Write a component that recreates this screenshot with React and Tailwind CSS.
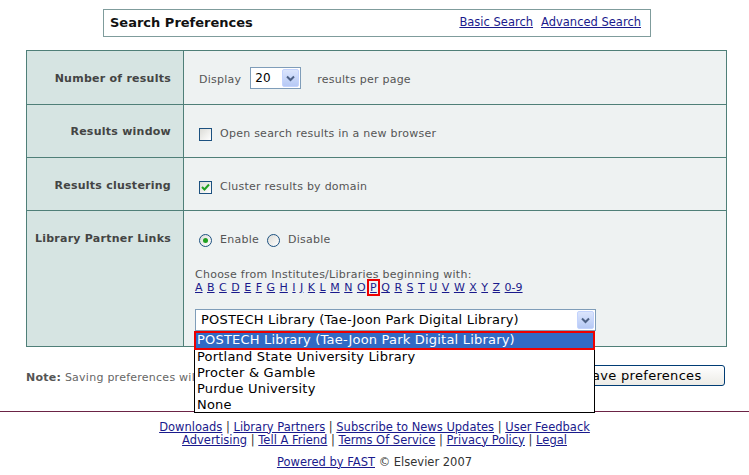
import React from "react";

const V = { fontFamily: '"DejaVu Sans", Verdana, sans-serif' };
const T = { fontFamily: '"DejaVu Sans", Tahoma, sans-serif' };

function Chevron({ className = "" }) {
  return (
    <svg width="9" height="7" viewBox="0 0 9 7" className={className}>
      <path d="M1 1.5 L4.5 5 L8 1.5" fill="none" stroke="#4d6185" strokeWidth="2" />
    </svg>
  );
}

function ArrowBtn({ h = 20 }) {
  return (
    <div
      className="w-[17px] flex items-center justify-center rounded-[2px] border border-[#c3d3fd] bg-gradient-to-b from-[#dbe5fc] to-[#b6c9f5]"
      style={{ height: h - 2 }}
    >
      <Chevron />
    </div>
  );
}

function Checkbox({ checked }) {
  return (
    <div className="w-[13px] h-[13px] border border-[#1c5180] bg-gradient-to-br from-[#dcdcd7] to-white flex items-center justify-center">
      {checked && (
        <svg width="9" height="9" viewBox="0 0 9 9">
          <path d="M1 4 L3.5 6.5 L8 1.5" fill="none" stroke="#21a121" strokeWidth="2" />
        </svg>
      )}
    </div>
  );
}

function Radio({ checked }) {
  return (
    <div className="w-[13px] h-[13px] rounded-full border border-[#1c5180] bg-gradient-to-br from-[#dcdcd7] to-white flex items-center justify-center">
      {checked && <div className="w-[5px] h-[5px] rounded-full bg-[#21a121]" />}
    </div>
  );
}

const letters = "ABCDEFGHIJKLMNOPQRSTUVWXYZ".split("");

export default function App() {
  return (
    <div className="relative w-[749px] h-[475px] bg-white overflow-hidden" style={V}>
      {/* header */}
      <div className="pt-[9px]">
        <div className="ml-[103px] w-[548px] h-[28px] border border-[#7f9c9c] flex items-center justify-between pl-[6px] pr-[9px]">
          <span className="text-[13px] font-bold text-[#111]">Search Preferences</span>
          <span className="text-[11.5px] text-[#1a1a8c] flex gap-[8px]" style={T}>
            <span className="underline">Basic Search</span>
            <span className="underline">Advanced Search</span>
          </span>
        </div>
      </div>

      {/* table */}
      <div className="mt-[13px] ml-[26px] w-[701px] border border-[#4f7f78] text-[11px] tracking-[0.25px]">
        <div className="flex h-[54px] border-b border-[#4f7f78]">
          <div className="w-[157px] bg-[#d6e4e2] border-r border-[#4f7f78] text-right pr-[12px] pt-[20px] font-bold text-[#444]">
            Number of results
          </div>
          <div className="flex-1 bg-[#eef2f2] text-[#555]">
            <div className="flex items-center pl-[15px] pt-[16px]">
              <span className="pt-[5px]">Display</span>
              <div className="ml-[9px] w-[51px] h-[22px] bg-white border border-[#7f9db9] flex items-center justify-between pl-[4px] pr-[1px] text-[12px] tracking-normal text-black" style={T}>
                <span>20</span>
                <ArrowBtn h={20} />
              </div>
              <span className="ml-[16px] pt-[5px]">results per page</span>
            </div>
          </div>
        </div>
        <div className="flex h-[53px] border-b border-[#4f7f78]">
          <div className="w-[157px] bg-[#d6e4e2] border-r border-[#4f7f78] text-right pr-[12px] pt-[19px] font-bold text-[#444]">
            Results window
          </div>
          <div className="flex-1 bg-[#eef2f2] flex items-center pl-[15px] pt-[6px] gap-[8px] text-[#555]">
            <Checkbox />
            <span>Open search results in a new browser</span>
          </div>
        </div>
        <div className="flex h-[53px] border-b border-[#4f7f78]">
          <div className="w-[157px] bg-[#d6e4e2] border-r border-[#4f7f78] text-right pr-[12px] pt-[20px] font-bold text-[#444]">
            Results clustering
          </div>
          <div className="flex-1 bg-[#eef2f2] flex items-center pl-[15px] pt-[6px] gap-[8px] text-[#555]">
            <Checkbox checked />
            <span>Cluster results by domain</span>
          </div>
        </div>
        <div className="flex h-[135px]">
          <div className="w-[157px] bg-[#d6e4e2] border-r border-[#4f7f78] text-right pr-[12px] pt-[20px] font-bold text-[#444]">
            Library Partner Links
          </div>
          <div className="flex-1 bg-[#eef2f2] pl-[11px] text-[#555]">
            <div className="flex items-center pl-[4px] pt-[19px] h-[39px]">
              <Radio checked />
              <span className="ml-[8px]">Enable</span>
              <span className="ml-[8px]"><Radio /></span>
              <span className="ml-[8px]">Disable</span>
            </div>
            <div className="mt-[18px] leading-[13px]">Choose from Institutes/Libraries beginning with:</div>
            <div className="flex gap-[4.5px] leading-[13px] text-[#1a1a8c] tracking-normal">
              {letters.map((l) =>
                l === "P" ? (
                  <span key={l} className="relative underline">
                    <span className="absolute -left-[3px] -right-[3px] -top-[2px] -bottom-[2px] border-2 border-[#e00]" />
                    {l}
                  </span>
                ) : (
                  <span key={l} className="underline">{l}</span>
                )
              )}
              <span className="underline">0-9</span>
            </div>
            <div className="mt-[15px] w-[401px] h-[22px] bg-white border border-[#7f9db9] flex items-center justify-between pl-[5px] pr-[1px] text-[13px] tracking-[0.2px] text-black" style={T}>
              <span>POSTECH Library (Tae-Joon Park Digital Library)</span>
              <ArrowBtn h={20} />
            </div>
          </div>
        </div>
      </div>

      {/* note + button */}
      <div className="flex items-center justify-between ml-[26px] w-[699px] mt-[18px]">
        <span className="text-[11px] tracking-[0.25px] text-[#666] pt-[5px]">
          <b className="text-[#555]">Note:</b> Saving preferences will
        </span>
        <button className="w-[165px] h-[21px] rounded-[3px] border border-[#003c74] bg-gradient-to-b from-white to-[#ecebe6] text-[13px] tracking-[0.3px] text-black" style={T}>
          Save preferences
        </button>
      </div>

      {/* rule */}
      <div className="mt-[24px] h-px bg-[#6b2345]" />

      {/* footer */}
      <div className="text-center text-[11.5px] text-[#333] leading-[13px] mt-[9px]" style={T}>
        <div>
          <a className="underline text-[#1a1a8c]">Downloads</a> | <a className="underline text-[#1a1a8c]">Library Partners</a> |{" "}
          <a className="underline text-[#1a1a8c]">Subscribe to News Updates</a> | <a className="underline text-[#1a1a8c]">User Feedback</a>
        </div>
        <div>
          <a className="underline text-[#1a1a8c]">Advertising</a> | <a className="underline text-[#1a1a8c]">Tell A Friend</a> |{" "}
          <a className="underline text-[#1a1a8c]">Terms Of Service</a> | <a className="underline text-[#1a1a8c]">Privacy Policy</a> |{" "}
          <a className="underline text-[#1a1a8c]">Legal</a>
        </div>
        <div className="mt-[9px]">
          <a className="underline text-[#1a1a8c]">Powered by FAST</a> © Elsevier 2007
        </div>
      </div>

      {/* open dropdown list */}
      <div className="absolute left-[194px] top-[331px] w-[401px] h-[82px] bg-white border border-black text-[13px] tracking-[0.2px] text-black leading-[16px]" style={T}>
        <div className="h-[17px] bg-[#316ac5] text-white pl-[2px] outline outline-2 -outline-offset-1 outline-[#e00]">
          POSTECH Library (Tae-Joon Park Digital Library)
        </div>
        <div className="pl-[2px]">Portland State University Library</div>
        <div className="pl-[2px]">Procter &amp; Gamble</div>
        <div className="pl-[2px]">Purdue University</div>
        <div className="pl-[2px]">None</div>
      </div>
    </div>
  );
}
